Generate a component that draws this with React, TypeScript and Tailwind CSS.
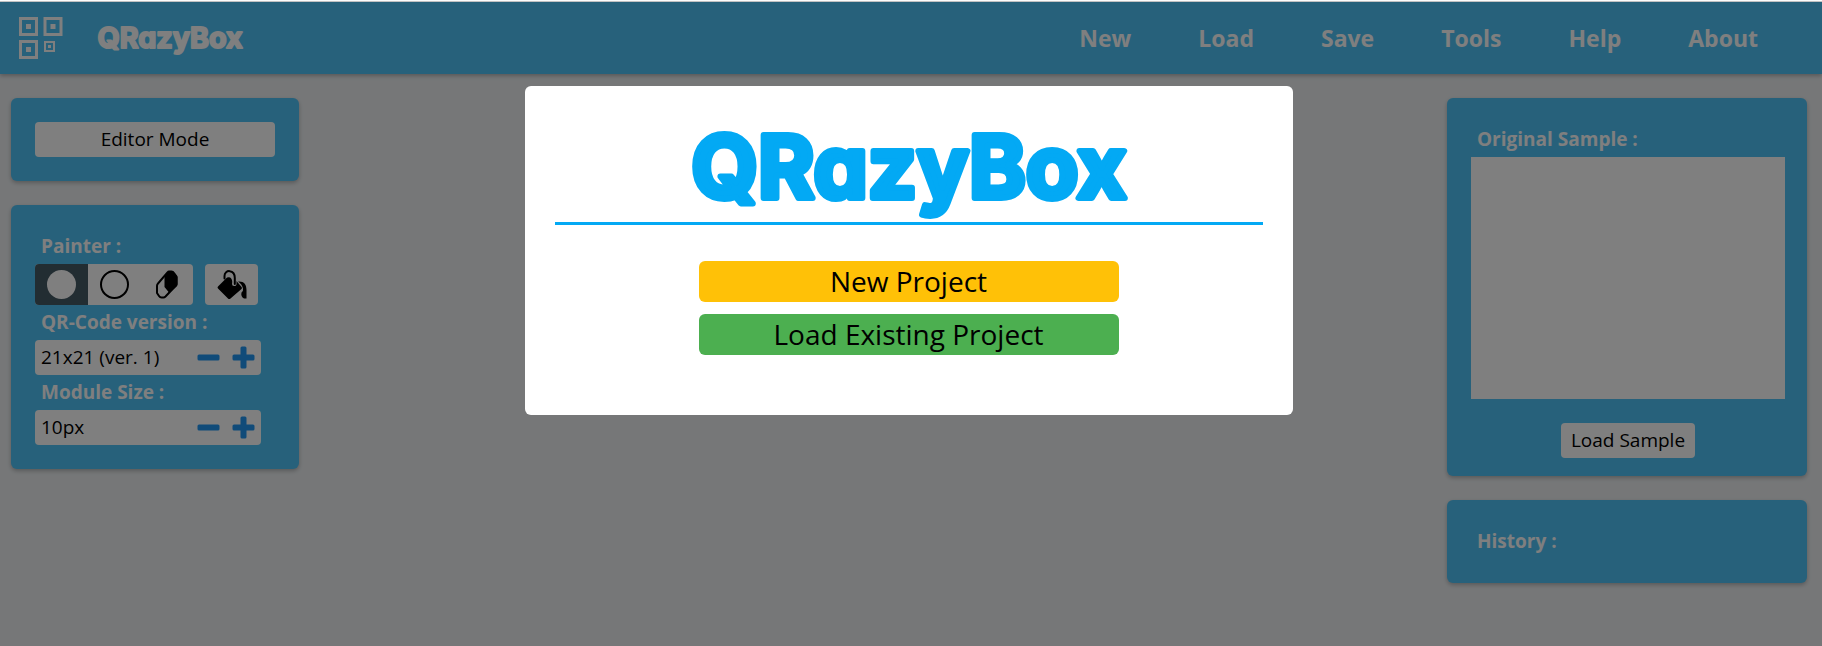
import type { ReactNode } from "react";

function Panel({ children, className = "" }: { children: ReactNode; className?: string }) {
  return (
    <section className={`rounded-md bg-[#4fc3f7] shadow-[0_2px_4px_rgba(0,0,0,0.25)] ${className}`}>
      {children}
    </section>
  );
}

function Label({ children }: { children: ReactNode }) {
  return <h2 className="h-[35px] px-1.5 text-[19px]/[35px] font-bold text-white">{children}</h2>;
}

function Wordmark({ className }: { className: string }) {
  return (
    <svg viewBox="0 0 450 96" className={`overflow-visible ${className}`} role="img" aria-label="QRazyBox">
      <text
        x="225"
        y="72"
        textAnchor="middle"
        fontFamily="Inter, sans-serif"
        fontWeight="700"
        fontSize="86"
        fill="currentColor"
        stroke="currentColor"
        strokeWidth="6"
        strokeLinejoin="round"
        style={{ fontFeatureSettings: '"cv11"' }}
      >
        QRazyBox
      </text>
    </svg>
  );
}

function QrIcon() {
  return (
    <svg viewBox="0 0 44 42" className="h-[42px] w-[44px]" fill="none" stroke="currentColor" aria-hidden="true">
      <g strokeWidth="3">
        <rect x="1.5" y="1.5" width="16" height="16" />
        <rect x="26" y="1.5" width="16" height="16" />
        <rect x="1.5" y="24.5" width="16" height="16" />
      </g>
      <rect x="26" y="25" width="9" height="9" strokeWidth="2" />
      <g fill="currentColor" stroke="none">
        <rect x="7" y="7" width="5" height="5" />
        <rect x="31.5" y="7" width="5" height="5" />
        <rect x="7" y="30" width="5" height="5" />
        <rect x="29" y="28" width="3" height="3" />
      </g>
    </svg>
  );
}

function EraserIcon() {
  return (
    <svg viewBox="0 0 29 29" className="size-[29px]" aria-hidden="true">
      <path
        d="M16 1.500h2.500q1.500 0 2.500 1.500l2.500 3.500V14q0 1-1 2L12.500 26.500q-1 1-2 1H8.500q-1.500 0-2.500-1.500L4 23V16q0-1.500 1-2.500L14.500 2.500q.7-1 1.500-1z"
        fill="none"
        stroke="currentColor"
        strokeWidth="2"
      />
      <path d="M11.500 6L15 2q1-1 2-1h2q1 0 2 1.500L24.500 7v7.500q0 1-1 2L16 22.500 11.500 17V14z" fill="currentColor" />
    </svg>
  );
}

function BucketIcon() {
  return (
    <svg viewBox="0 0 30 30" className="size-[30px]" fill="none" stroke="currentColor" aria-hidden="true">
      <path
        d="M9 8.500L1 16.500q-1 1 0 2L11 28.500q1 1 2.500 0L24.500 19q1-1 0-2L19.500 11v3.500q-.5 2-2.500 1.500-2 0-2-2c1-4-1-7-3-6.800q-2-.2-3 1.300z"
        fill="currentColor"
        stroke="none"
      />
      <path d="M7.500 8.500V6C7.500-.8 17.800-.8 17.800 8v6" strokeWidth="2" strokeLinecap="round" />
      <path d="M21 11.500c6-.5 8.500 3 8.500 8.500v8.500h-2.500q-3.500-2-2.500-6 2-1 1.500-4-1-4.500-5-7z" fill="currentColor" stroke="none" />
    </svg>
  );
}

function Stepper({ label, value }: { label: string; value: string }) {
  return (
    <div role="group" aria-label={label}>
      <Label>{label} :</Label>
      <div className="mr-3.5 flex h-[35px] items-center rounded bg-white px-1.5">
        <output className="flex-1 text-[19px]/[35px]">{value}</output>
        <button type="button" aria-label={`Decrease ${label}`} className="mr-3 text-[#2196f3]">
          <svg viewBox="0 0 23 23" className="size-[23px]" fill="currentColor">
            <rect x="0.5" y="8.5" width="22" height="6" rx="1.5" />
          </svg>
        </button>
        <button type="button" aria-label={`Increase ${label}`} className="text-[#2196f3]">
          <svg viewBox="0 0 23 23" className="size-[23px]" fill="currentColor">
            <rect x="0.5" y="8.5" width="22" height="6" rx="1.5" />
            <rect x="8.5" y="0.5" width="6" height="22" rx="1.5" />
          </svg>
        </button>
      </div>
    </div>
  );
}

const menu = ["New", "Load", "Save", "Tools", "Help", "About"];

export default function App() {
  return (
    <div className="min-h-screen bg-[#eceff1] font-['Open_Sans',sans-serif] text-black">
      <div className="h-0.5 border-b border-[#c8c8c8] bg-white" />
      <header className="flex h-[72px] items-center bg-[#4fc3f7] pr-16 pl-[19px] text-white shadow-[0_2px_4px_rgba(0,0,0,0.25)]">
        <QrIcon />
        <Wordmark className="mt-1 ml-8 h-8" />
        <nav className="ml-auto flex gap-[67px]">
          {menu.map((item) => (
            <a key={item} href={`#${item.toLowerCase()}`} className="text-[23px] font-bold">
              {item}
            </a>
          ))}
        </nav>
      </header>

      <main className="flex items-start justify-between pt-6 pr-[15px] pl-[11px]">
        <div className="flex w-72 flex-col gap-6">
          <Panel className="p-6">
            <button type="button" className="block h-[35px] w-full rounded bg-white text-[19px]/[35px]">
              Editor Mode
            </button>
          </Panel>
          <Panel className="p-6">
            <Label>Painter :</Label>
            <div className="flex gap-3">
              <div className="flex h-[41px] overflow-hidden rounded bg-white">
                <button
                  type="button"
                  aria-label="Paint white"
                  className="flex w-[53px] items-center justify-center bg-[#455a64] text-white"
                >
                  <svg viewBox="0 0 29 29" className="size-[29px]">
                    <circle cx="14.5" cy="14.5" r="14.5" fill="currentColor" />
                  </svg>
                </button>
                <button type="button" aria-label="Paint black" className="flex w-[53px] items-center justify-center">
                  <svg viewBox="0 0 29 29" className="size-[29px]">
                    <circle cx="14.5" cy="14.5" r="13.5" fill="none" stroke="currentColor" strokeWidth="2" />
                  </svg>
                </button>
                <button type="button" aria-label="Eraser" className="flex w-[52px] items-center justify-center">
                  <EraserIcon />
                </button>
              </div>
              <button
                type="button"
                aria-label="Fill"
                className="flex h-[41px] w-[53px] items-center justify-center rounded bg-white"
              >
                <BucketIcon />
              </button>
            </div>
            <Stepper label="QR-Code version" value="21x21 (ver. 1)" />
            <Stepper label="Module Size" value="10px" />
          </Panel>
        </div>

        <div className="flex w-[360px] flex-col gap-6">
          <Panel className="pt-6 pr-[22px] pb-[18px] pl-6">
            <Label>Original Sample :</Label>
            <div className="h-[242px] bg-white" />
            <div className="mt-6 flex justify-center">
              <button type="button" className="h-[35px] rounded bg-white px-2.5 text-[19px]/[35px]">
                Load Sample
              </button>
            </div>
          </Panel>
          <Panel className="p-6">
            <Label>History :</Label>
          </Panel>
        </div>
      </main>

      <div className="fixed inset-x-0 top-0.5 bottom-0 flex items-start justify-center bg-black/50 pt-[84px] pr-[5px]">
        <div
          role="dialog"
          aria-modal="true"
          aria-label="QRazyBox"
          className="w-full max-w-[768px] rounded-md bg-white px-[30px] pt-10 pb-[60px]"
        >
          <div className="flex justify-center border-b-[3px] border-[#03a9f4] text-[#03a9f4]">
            <Wordmark className="h-24" />
          </div>
          <div className="mx-auto mt-9 flex max-w-[420px] flex-col gap-3 text-[28px]/[41px]">
            <button type="button" className="h-[41px] rounded-md bg-[#ffc107]">
              New Project
            </button>
            <button type="button" className="h-[41px] rounded-md bg-[#4caf50]">
              Load Existing Project
            </button>
          </div>
        </div>
      </div>
    </div>
  );
}
